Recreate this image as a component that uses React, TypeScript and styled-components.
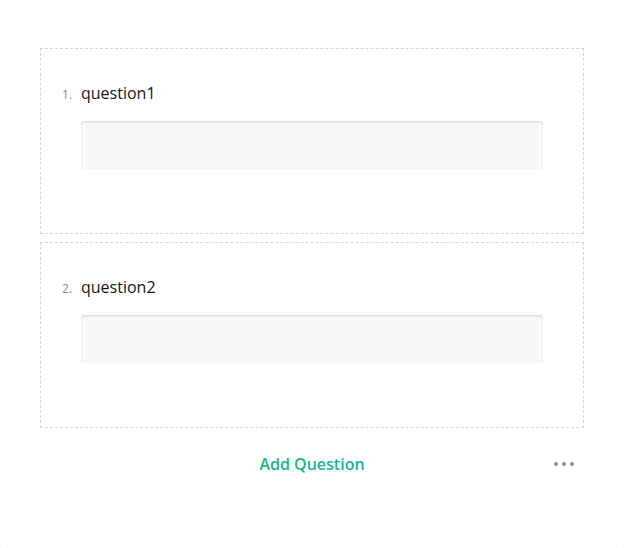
import React from "react";
import styled, { createGlobalStyle } from "styled-components";

const GlobalStyle = createGlobalStyle`
  html, body {
    margin: 0;
    padding: 0;
    background: #f3f3f3;
  }
  body {
    font-family: "Open Sans", "Noto Sans", sans-serif;
  }
`;

const Card = styled.div`
  box-sizing: border-box;
  width: 624px;
  height: 548px;
  background: #ffffff;
  border-radius: 4px;
  padding: 48px 40px 0;
  display: flex;
  flex-direction: column;
  gap: 8px;
`;

const Panel = styled.div`
  box-sizing: border-box;
  height: 186px;
  border: 1px dashed #d6d6d6;
  padding: 32px 40px 0;
`;

const TitleRow = styled.div`
  display: flex;
  align-items: baseline;
  height: 24px;
  line-height: 24px;
`;

const Number = styled.span`
  margin-left: -19px;
  width: 19px;
  font-size: 12px;
  color: #8a8a8a;
`;

const Title = styled.span`
  font-size: 16px;
  color: #161616;
`;

const Input = styled.div`
  margin-top: 16px;
  height: 48px;
  background: #f8f8f8;
  border-radius: 3px;
  box-shadow: inset 0 1px 2px rgba(0, 0, 0, 0.15);
`;

const Footer = styled.div`
  position: relative;
  height: 56px;
  display: flex;
  align-items: center;
  justify-content: center;
`;

const AddButton = styled.button`
  border: none;
  background: none;
  padding: 0;
  font-family: "Open Sans", "Noto Sans", sans-serif;
  font-size: 16px;
  font-weight: 600;
  color: #19b394;
  cursor: pointer;
`;

const MoreButton = styled.button`
  position: absolute;
  right: 6px;
  top: 50%;
  transform: translateY(-50%);
  border: none;
  background: none;
  padding: 4px;
  display: flex;
  gap: 4px;
`;

const Dot = styled.span`
  width: 4px;
  height: 4px;
  border-radius: 50%;
  background: #909090;
`;

const questions = ["question1", "question2"];

export default function App() {
  return (
    <>
      <GlobalStyle />
      <Card>
        {questions.map((q, i) => (
          <Panel key={q}>
            <TitleRow>
              <Number>{i + 1}.</Number>
              <Title>{q}</Title>
            </TitleRow>
            <Input />
          </Panel>
        ))}
        <Footer>
          <AddButton>Add Question</AddButton>
          <MoreButton aria-label="More">
            <Dot />
            <Dot />
            <Dot />
          </MoreButton>
        </Footer>
      </Card>
    </>
  );
}
